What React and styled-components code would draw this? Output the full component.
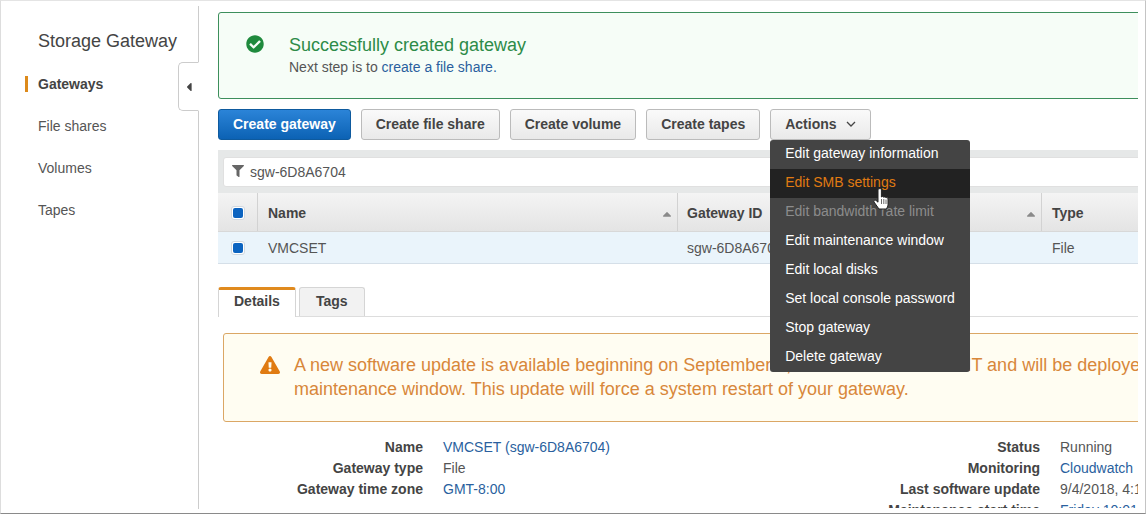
import React from "react";
import styled, { createGlobalStyle } from "styled-components";
import {
  FaCheckCircle,
  FaExclamationTriangle,
  FaFilter,
  FaCaretLeft,
  FaCaretUp,
} from "react-icons/fa";

const GlobalStyle = createGlobalStyle`
  html, body {
    margin: 0;
    padding: 0;
    background: #fff;
    overflow: hidden;
  }
  * { box-sizing: border-box; }
`;

const Frame = styled.div`
  width: 1146px;
  height: 514px;
  display: flex;
  background: #fff;
  border-top: 1px solid #e4e4e4;
  border-left: 1px solid #ddd;
  border-right: 1px solid #c4c4c4;
  border-bottom: 1px solid #8a8a8a;
  font-family: "Liberation Sans", Arial, sans-serif;
  font-size: 14px;
  color: #444;
`;

const Sidebar = styled.aside`
  position: relative;
  flex: 0 0 198px;
  height: 503px;
  margin-top: 5px;
  border-right: 1px solid #ccc;
  padding: 24px 0 0 37px;
`;

const SideTitle = styled.h1`
  margin: 0 0 21px;
  font-size: 18px;
  line-height: 22px;
  font-weight: 400;
  color: #444;
`;

const NavItem = styled.div`
  position: relative;
  height: 42px;
  line-height: 20px;
  padding-top: 1px;
  font-weight: ${(p) => (p.$active ? 700 : 400)};
  color: ${(p) => (p.$active ? "#444" : "#555")};

  ${(p) =>
    p.$active &&
    `&::before {
      content: "";
      position: absolute;
      left: -13px;
      top: 3px;
      width: 3px;
      height: 16px;
      background: #dd8a1b;
    }`}
`;

const CollapseTab = styled.div`
  position: absolute;
  right: -1px;
  top: 56px;
  width: 21px;
  height: 49px;
  display: flex;
  align-items: center;
  justify-content: center;
  background: #fff;
  border: 1px solid #ccc;
  border-right: 1px solid #fff;
  border-radius: 5px 0 0 5px;
  color: #444;
  font-size: 14px;
`;

const Main = styled.main`
  position: relative;
  flex: 0 0 939px;
  height: 507px;
  overflow: hidden;
  padding: 11px 0 0 19px;
`;

const Content = styled.div`
  width: 1100px;
`;

const Alert = styled.div`
  display: flex;
  height: ${(p) => p.$height}px;
  border: 1px solid ${(p) => p.$border};
  border-radius: 3px;
  background: ${(p) => p.$bg};
`;

const SuccessIcon = styled.div`
  flex: 0 0 70px;
  padding: 22px 0 0 27px;
  color: #1f8a3d;
  font-size: 18px;
  line-height: 18px;
`;

const AlertBody = styled.div`
  padding-top: 20px;
`;

const SuccessTitle = styled.div`
  font-size: 18px;
  line-height: 24px;
  color: #2d8b48;
`;

const SuccessText = styled.div`
  line-height: 20px;
  color: #555;
`;

const Link = styled.span`
  color: #2a5f9e;
`;

const Toolbar = styled.div`
  display: flex;
  gap: 10px;
  margin-top: 10px;
`;

const Button = styled.div`
  height: 31px;
  padding: 0 14px 2px;
  display: flex;
  align-items: center;
  gap: 9px;
  border-radius: 3px;
  border: 1px solid ${(p) => (p.$primary ? "#0e5a9e" : "#bbb")};
  background: ${(p) =>
    p.$primary
      ? "linear-gradient(#2b84d8, #0c62b4)"
      : "linear-gradient(#fafafa, #e9e9e9)"};
  color: ${(p) => (p.$primary ? "#fff" : "#444")};
  font-weight: 700;
  white-space: nowrap;
`;

const ActionsWrap = styled.div`
  position: relative;
`;

const Menu = styled.div`
  position: absolute;
  left: 0;
  top: 100%;
  z-index: 5;
  width: 200px;
  background: #444;
  border-radius: 3px;
  overflow: hidden;
`;

const MenuItem = styled.div`
  height: 29px;
  padding-left: 15px;
  line-height: 27px;
  white-space: nowrap;
  color: ${(p) => (p.$disabled ? "#8c8c8c" : p.$hover ? "#e07b12" : "#fff")};
  background: ${(p) => (p.$hover ? "#222" : "transparent")};
`;

const Cursor = styled.svg`
  position: absolute;
  left: 103px;
  top: 78px;
  z-index: 6;
`;

const Filter = styled.div`
  margin-top: 10px;
  height: 43px;
  padding: 7px 0 6px 5px;
  background: #e6e8e8;
`;

const FilterInput = styled.div`
  height: 30px;
  display: flex;
  align-items: center;
  gap: 6px;
  padding-left: 8px;
  background: #fff;
  border: 1px solid #e0e0e0;
  border-radius: 3px;
  color: #555;
  svg {
    color: #666;
    font-size: 12px;
    margin-top: -3px;
  }
`;

const Row = styled.div`
  display: grid;
  grid-template-columns: 40px 420px 364px 1fr;
  height: ${(p) => (p.$head ? 39 : 32)}px;
  background: ${(p) =>
    p.$head ? "linear-gradient(#f4f4f4, #e4e4e4)" : "#eaf4fb"};
  border-bottom: 1px solid ${(p) => (p.$head ? "#d8d8d8" : "#d5dfe8")};
`;

const Cell = styled.div`
  position: relative;
  display: flex;
  align-items: center;
  padding-left: ${(p) => p.$pad || 10}px;
  padding-top: ${(p) => (p.$head ? 2 : 0)}px;
  font-weight: ${(p) => (p.$head ? 700 : 400)};
  color: ${(p) => (p.$head ? "#444" : "#555")};
  border-right: ${(p) => (p.$head ? "1px solid #d2d2d2" : "none")};
  white-space: nowrap;
`;

const Sort = styled.span`
  position: absolute;
  right: 3px;
  top: 14px;
  color: #8a8a8a;
  font-size: 14px;
  line-height: 14px;
`;

const Check = styled.span`
  width: 14px;
  height: 14px;
  padding: 1px;
  background: #fff;
  border: 1px solid #d0d8e0;
  border-radius: 3px;
  &::before {
    content: "";
    display: block;
    width: 10px;
    height: 10px;
    background: #0b63c0;
    border-radius: 2px;
  }
`;

const Tabs = styled.div`
  display: flex;
  gap: 3px;
  height: 30px;
  margin-top: 23px;
  border-bottom: 1px solid #ddd;
`;

const Tab = styled.div`
  height: ${(p) => (p.$active ? 30 : 29)}px;
  padding: 0 ${(p) => (p.$active ? 15 : 16)}px ${(p) => (p.$active ? 5 : 3)}px;
  display: flex;
  align-items: center;
  font-weight: 700;
  color: #444;
  background: ${(p) => (p.$active ? "#fff" : "#f2f2f2")};
  border: 1px solid #d5d5d5;
  border-top: ${(p) => (p.$active ? "3px solid #e08a1e" : "1px solid #d5d5d5")};
  border-bottom: none;
  border-radius: 3px 3px 0 0;
`;

const WarningWrap = styled.div`
  margin: 16px 0 0 5px;
`;

const WarnIcon = styled.div`
  flex: 0 0 70px;
  padding: 21px 0 0 36px;
  color: #e07b12;
  font-size: 20px;
  line-height: 20px;
`;

const WarnText = styled.div`
  padding-top: 19px;
  font-size: 18px;
  line-height: 24px;
  color: #d8873a;
  white-space: nowrap;
`;

const Details = styled.div`
  display: grid;
  grid-template-columns: 205px 415px 202px 1fr;
  margin-top: 15px;
  line-height: 21px;
`;

const Labels = styled.div`
  text-align: right;
  font-weight: 700;
  color: #444;
  white-space: nowrap;
`;

const Values = styled.div`
  padding-left: 20px;
  color: #555;
  white-space: nowrap;
`;

const menuItems = [
  { label: "Edit gateway information" },
  { label: "Edit SMB settings", hover: true },
  { label: "Edit bandwidth rate limit", disabled: true },
  { label: "Edit maintenance window" },
  { label: "Edit local disks" },
  { label: "Set local console password" },
  { label: "Stop gateway" },
  { label: "Delete gateway" },
];

export default function App() {
  return (
    <Frame>
      <GlobalStyle />
      <Sidebar>
        <SideTitle>Storage Gateway</SideTitle>
        <NavItem $active>Gateways</NavItem>
        <NavItem>File shares</NavItem>
        <NavItem>Volumes</NavItem>
        <NavItem>Tapes</NavItem>
        <CollapseTab>
          <FaCaretLeft />
        </CollapseTab>
      </Sidebar>
      <Main>
        <Content>
          <Alert $height={87} $border="#3d8f5c" $bg="#f6fdf7">
            <SuccessIcon>
              <FaCheckCircle />
            </SuccessIcon>
            <AlertBody>
              <SuccessTitle>Successfully created gateway</SuccessTitle>
              <SuccessText>
                Next step is to <Link>create a file share.</Link>
              </SuccessText>
            </AlertBody>
          </Alert>

          <Toolbar>
            <Button $primary>Create gateway</Button>
            <Button>Create file share</Button>
            <Button>Create volume</Button>
            <Button>Create tapes</Button>
            <ActionsWrap>
              <Button>
                Actions
                <svg width="10" height="6" viewBox="0 0 10 6" fill="none" stroke="#444" strokeWidth="1.3">
                  <path d="M1 1l4 4 4-4" />
                </svg>
              </Button>
              <Menu>
                {menuItems.map((item) => (
                  <MenuItem key={item.label} $hover={item.hover} $disabled={item.disabled}>
                    {item.label}
                  </MenuItem>
                ))}
              </Menu>
              <Cursor width="18" height="26" viewBox="0 0 18 26">
                <path
                  d="M6 2c1 -1 2.4 -.4 2.4 1v7c.8 -.8 2 -.6 2.3 .3 .7 -.7 2 -.5 2.3 .5 .8 -.5 2 0 2 1.200v5.500c0 2 -1 3 -1.500 4.500h-7.500l-5 -7c-.8 -1.300 .8 -2.600 2 -1.600l2 1.800v-12.200c0 -.5 .2 -1 1 -1.500z"
                  fill="#fff"
                  stroke="#222"
                  strokeWidth="1"
                />
                <path d="M8.500 12v5M10.800 12v5M13 12.500v4.500" stroke="#444" strokeWidth="0.8" />
              </Cursor>
            </ActionsWrap>
          </Toolbar>

          <Filter>
            <FilterInput>
              <FaFilter />
              sgw-6D8A6704
            </FilterInput>
          </Filter>

          <Row $head>
            <Cell $head $pad={13}>
              <Check />
            </Cell>
            <Cell $head>
              Name
              <Sort>
                <FaCaretUp />
              </Sort>
            </Cell>
            <Cell $head $pad={9}>
              Gateway ID
              <Sort>
                <FaCaretUp />
              </Sort>
            </Cell>
            <Cell $head>Type</Cell>
          </Row>
          <Row>
            <Cell $pad={13}>
              <Check />
            </Cell>
            <Cell>VMCSET</Cell>
            <Cell $pad={9}>sgw-6D8A6704</Cell>
            <Cell>File</Cell>
          </Row>

          <Tabs>
            <Tab $active>Details</Tab>
            <Tab>Tags</Tab>
          </Tabs>

          <WarningWrap>
            <Alert $height={89} $border="#dba765" $bg="#fffdf2">
              <WarnIcon>
                <FaExclamationTriangle />
              </WarnIcon>
              <WarnText>
                A new software update is available beginning on September 4, 2018 at 10:00 AM GMT and will be deployed during your
                <br />
                maintenance window. This update will force a system restart of your gateway.
              </WarnText>
            </Alert>
          </WarningWrap>

          <Details>
            <Labels>
              Name
              <br />
              Gateway type
              <br />
              Gateway time zone
            </Labels>
            <Values>
              <Link>VMCSET (sgw-6D8A6704)</Link>
              <br />
              File
              <br />
              <Link>GMT-8:00</Link>
            </Values>
            <Labels>
              Status
              <br />
              Monitoring
              <br />
              Last software update
              <br />
              Maintenance start time
            </Labels>
            <Values>
              Running
              <br />
              <Link>Cloudwatch</Link>
              <br />
              9/4/2018, 4:17 PM
              <br />
              <Link>Friday 10:01</Link>
            </Values>
          </Details>
        </Content>
      </Main>
    </Frame>
  );
}
